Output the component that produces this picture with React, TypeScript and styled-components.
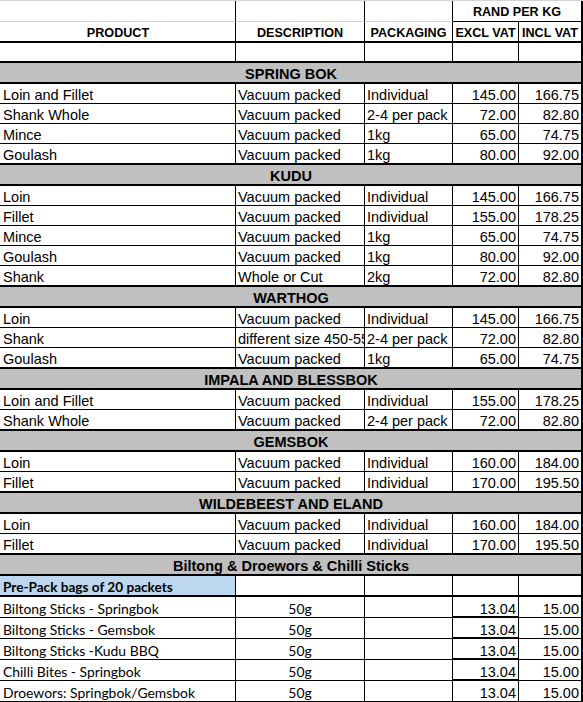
import React from "react";
import styled, { createGlobalStyle, css } from "styled-components";

const GlobalStyle = createGlobalStyle`
  html, body {
    margin: 0;
    padding: 0;
    background: #ffffff;
    overflow: hidden;
  }
  body {
    font-family: "Liberation Sans", Arial, sans-serif;
    color: #000000;
  }
`;

type Edge = "grid" | "thin" | "thick" | "none";

const edge = (e: Edge) => {
  if (e === "thick") return "2px solid #000";
  if (e === "thin") return "1px solid #000";
  if (e === "grid") return "1px solid #d4d4d4";
  return "none";
};

const Sheet = styled.div`
  width: 583px;
  display: flex;
  flex-direction: column;
`;

const Row = styled.div<{ $h: number; $top?: boolean }>`
  display: grid;
  grid-template-columns: 236px 129px 88px 66px 64px;
  height: ${(p) => p.$h}px;
  box-sizing: border-box;
  ${(p) => p.$top && "border-top: 1px solid #d4d4d4;"}
`;

const Cell = styled.div<{
  $bottom?: Edge;
  $align?: "left" | "center" | "right";
  $bg?: string;
  $bold?: boolean;
  $calibri?: boolean;
  $span?: string;
  $last?: boolean;
  $size?: number;
  $shadow?: boolean;
}>`
  box-sizing: border-box;
  display: flex;
  align-items: center;
  justify-content: ${(p) =>
    p.$align === "center" ? "center" : p.$align === "right" ? "flex-end" : "flex-start"};
  padding: 3px 2px 0 2px;
  border-right: ${(p) => (p.$last ? "2px solid #000" : "1px solid #000")};
  border-bottom: ${(p) => edge(p.$bottom || "thin")};
  background: ${(p) => p.$bg || "#ffffff"};
  font-size: ${(p) => p.$size || 14.5}px;
  font-weight: ${(p) => (p.$bold ? 700 : 400)};
  white-space: nowrap;
  overflow: hidden;
  ${(p) => p.$span && `grid-column: ${p.$span};`}
  ${(p) =>
    p.$calibri &&
    css`
      font-family: Lato, "Open Sans", sans-serif;
      font-size: ${p.$bold ? 13.6 : 13.9}px;
    `}
  ${(p) => p.$shadow && "box-shadow: inset 0 -1px 0 #000;"}
  &:first-child {
    padding-left: 3px;
  }
`;

const HeadCell = styled(Cell).attrs({ $bold: true, $align: "center", $size: 12.6 })`
  padding-top: 2px;
`;

const SectionCell = styled(Cell).attrs({
  $bold: true,
  $align: "center",
  $span: "1 / -1",
  $last: true,
  $bottom: "thick" as Edge,
  $bg: "#c0c0c0",
})`
  padding-left: 5px;
  padding-top: 2px;
`;

type Item = [string, string, string, string, string];

const sections: { title: string; items: Item[] }[] = [
  {
    title: "SPRING BOK",
    items: [
      ["Loin and Fillet", "Vacuum packed", "Individual", "145.00", "166.75"],
      ["Shank Whole", "Vacuum packed", "2-4 per pack", "72.00", "82.80"],
      ["Mince", "Vacuum packed", "1kg", "65.00", "74.75"],
      ["Goulash", "Vacuum packed", "1kg", "80.00", "92.00"],
    ],
  },
  {
    title: "KUDU",
    items: [
      ["Loin", "Vacuum packed", "Individual", "145.00", "166.75"],
      ["Fillet", "Vacuum packed", "Individual", "155.00", "178.25"],
      ["Mince", "Vacuum packed", "1kg", "65.00", "74.75"],
      ["Goulash", "Vacuum packed", "1kg", "80.00", "92.00"],
      ["Shank", "Whole or Cut", "2kg", "72.00", "82.80"],
    ],
  },
  {
    title: "WARTHOG",
    items: [
      ["Loin", "Vacuum packed", "Individual", "145.00", "166.75"],
      ["Shank", "different size 450-550g", "2-4 per pack", "72.00", "82.80"],
      ["Goulash", "Vacuum packed", "1kg", "65.00", "74.75"],
    ],
  },
  {
    title: "IMPALA AND BLESSBOK",
    items: [
      ["Loin and Fillet", "Vacuum packed", "Individual", "155.00", "178.25"],
      ["Shank Whole", "Vacuum packed", "2-4 per pack", "72.00", "82.80"],
    ],
  },
  {
    title: "GEMSBOK",
    items: [
      ["Loin", "Vacuum packed", "Individual", "160.00", "184.00"],
      ["Fillet", "Vacuum packed", "Individual", "170.00", "195.50"],
    ],
  },
  {
    title: "WILDEBEEST AND ELAND",
    items: [
      ["Loin", "Vacuum packed", "Individual", "160.00", "184.00"],
      ["Fillet", "Vacuum packed", "Individual", "170.00", "195.50"],
    ],
  },
];

const biltong: [string, string, string, string][] = [
  ["Biltong Sticks - Springbok", "50g", "13.04", "15.00"],
  ["Biltong Sticks - Gemsbok", "50g", "13.04", "15.00"],
  ["Biltong Sticks -Kudu BBQ", "50g", "13.04", "15.00"],
  ["Chilli Bites - Springbok", "50g", "13.04", "15.00"],
  ["Droewors: Springbok/Gemsbok", "50g", "13.04", "15.00"],
];

const App: React.FC = () => {
  return (
    <>
      <GlobalStyle />
      <Sheet>
        <Row $h={22} $top>
          <HeadCell $bottom="grid" />
          <HeadCell $bottom="grid" />
          <HeadCell $bottom="grid" />
          <HeadCell $span="4 / 6" $last>
            RAND PER KG
          </HeadCell>
        </Row>
        <Row $h={21}>
          <HeadCell $bottom="thick">PRODUCT</HeadCell>
          <HeadCell $bottom="thick">DESCRIPTION</HeadCell>
          <HeadCell $bottom="thick">PACKAGING</HeadCell>
          <HeadCell $bottom="thick">EXCL VAT</HeadCell>
          <HeadCell $bottom="thick" $last>
            INCL VAT
          </HeadCell>
        </Row>
        <Row $h={20}>
          <Cell $bottom="thick" />
          <Cell $bottom="thick" />
          <Cell $bottom="thick" />
          <Cell $bottom="thick" />
          <Cell $bottom="thick" $last />
        </Row>

        {sections.map((s) => (
          <React.Fragment key={s.title}>
            <Row $h={21}>
              <SectionCell>{s.title}</SectionCell>
            </Row>
            {s.items.map((it, i) => {
              const end = i === s.items.length - 1;
              const b: Edge = end ? "thick" : "thin";
              return (
                <Row $h={end ? 21 : 20} key={s.title + i}>
                  <Cell $bottom={b}>{it[0]}</Cell>
                  <Cell $bottom={b}>{it[1]}</Cell>
                  <Cell $bottom={b}>{it[2]}</Cell>
                  <Cell $bottom={b} $align="right">
                    {it[3]}
                  </Cell>
                  <Cell $bottom={b} $align="right" $last>
                    {it[4]}
                  </Cell>
                </Row>
              );
            })}
          </React.Fragment>
        ))}

        <Row $h={21}>
          <SectionCell>Biltong &amp; Droewors &amp; Chilli Sticks</SectionCell>
        </Row>
        <Row $h={21}>
          <Cell $bottom="thick" $bg="#bdd7ee" $calibri $bold>
            Pre-Pack bags of 20 packets
          </Cell>
          <Cell $bottom="thick" />
          <Cell $bottom="thick" />
          <Cell $bottom="thick" />
          <Cell $bottom="thick" $last />
        </Row>
        {biltong.map((b, i) => (
          <Row $h={21} key={b[0]}>
            <Cell $calibri>{b[0]}</Cell>
            <Cell $calibri $align="center">
              {b[1]}
            </Cell>
            <Cell />
            <Cell $align="right" $shadow={i < biltong.length - 1}>
              {b[2]}
            </Cell>
            <Cell $align="right" $last>
              {b[3]}
            </Cell>
          </Row>
        ))}
      </Sheet>
    </>
  );
};

export default App;
